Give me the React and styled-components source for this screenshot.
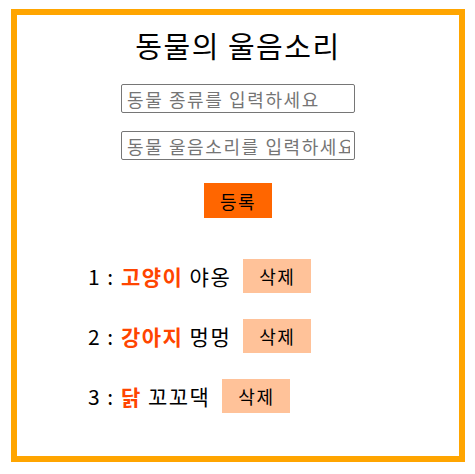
import React, { useState } from "react";
import styled, { createGlobalStyle } from "styled-components";

const GlobalStyle = createGlobalStyle`
  body {
    margin: 0;
    background: #fff;
    font-family: "Noto Sans CJK KR", "Noto Sans", sans-serif;
  }
`;

const Frame = styled.div`
  margin: 9px 0 0 11px;
  width: 454px;
  height: 453px;
  box-sizing: border-box;
  border: 6px solid #ffa500;
  display: flex;
  flex-direction: column;
  align-items: center;
`;

const Title = styled.h1`
  margin: 10px 0 19px;
  font-size: 29px;
  font-weight: 400;
  letter-spacing: 1.5px;
  line-height: 40px;
  color: #000;
`;

const Input = styled.input`
  width: 234px;
  height: 29px;
  box-sizing: border-box;
  margin: 0 0 ${(p) => p.$gap}px;
  padding: 1px 4px 1px 5px;
  border: 1px solid #767676;
  border-radius: 2px;
  font-family: inherit;
  font-size: 18px;
  letter-spacing: 1.6px;
  &::placeholder {
    color: #757575;
  }
`;

const RegisterButton = styled.button`
  width: 68px;
  height: 35px;
  border: none;
  background: #ff6600;
  color: #000;
  font-family: inherit;
  font-size: 18px;
  letter-spacing: 1.5px;
  padding: 0;
`;

const List = styled.div`
  align-self: stretch;
  margin-top: 41px;
  padding-left: 71px;
  display: flex;
  flex-direction: column;
  gap: 26px;
`;

const Row = styled.div`
  display: flex;
  align-items: center;
  height: 34px;
  font-size: 21px;
  letter-spacing: 1.5px;
  color: #000;
  white-space: pre;
`;

const Name = styled.b`
  color: #ff4500;
`;

const DeleteButton = styled.button`
  width: 68px;
  height: 34px;
  margin-left: 12px;
  border: none;
  background: #ffc299;
  color: #000;
  font-family: inherit;
  font-size: 18px;
  letter-spacing: 1.5px;
  padding: 0;
`;

const initial = [
  { id: 1, name: "고양이", sound: "야옹" },
  { id: 2, name: "강아지", sound: "멍멍" },
  { id: 3, name: "닭", sound: "꼬꼬댁" },
];

export default function App() {
  const [animals, setAnimals] = useState(initial);
  const [name, setName] = useState("");
  const [sound, setSound] = useState("");

  const add = () => {
    if (!name || !sound) return;
    setAnimals([...animals, { id: Date.now(), name, sound }]);
    setName("");
    setSound("");
  };

  return (
    <>
      <GlobalStyle />
      <Frame>
        <Title>동물의 울음소리</Title>
        <Input
          $gap={18}
          placeholder="동물 종류를 입력하세요"
          value={name}
          onChange={(e) => setName(e.target.value)}
        />
        <Input
          $gap={23}
          placeholder="동물 울음소리를 입력하세요"
          value={sound}
          onChange={(e) => setSound(e.target.value)}
        />
        <RegisterButton onClick={add}>등록</RegisterButton>
        <List>
          {animals.map((a, i) => (
            <Row key={a.id}>
              {`${i + 1} : `}
              <Name>{a.name}</Name>
              {` ${a.sound}`}
              <DeleteButton
                onClick={() => setAnimals(animals.filter((x) => x.id !== a.id))}
              >
                삭제
              </DeleteButton>
            </Row>
          ))}
        </List>
      </Frame>
    </>
  );
}
